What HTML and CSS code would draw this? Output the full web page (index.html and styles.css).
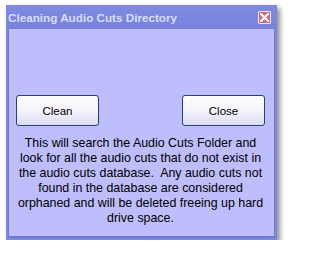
FILE: index.html
```html
<!DOCTYPE html>
<html>
<head>
<meta charset="utf-8">
<link rel="stylesheet" href="styles.css">
</head>
<body>
<div class="window">
  <div class="titlebar">
    <span class="title">Cleaning Audio Cuts Directory</span>
    <span class="close-x">
      <svg width="9" height="9" viewBox="0 0 9 9"><path d="M1 1 L8 8 M8 1 L1 8" stroke="#fff" stroke-width="2.2" stroke-linecap="square"/></svg>
    </span>
  </div>
  <div class="content">
    <div class="buttons">
      <button class="btn">Clean</button>
      <button class="btn">Close</button>
    </div>
    <p class="message">This will search the Audio Cuts Folder and<br>look for all the audio cuts that do not exist in<br>the audio cuts database.&nbsp; Any audio cuts not<br>found in the database are considered<br>orphaned and will be deleted freeing up hard<br>drive space.</p>
  </div>
</div>
</body>
</html>
```
FILE: styles.css
```css
html, body {
  margin: 0;
  padding: 0;
  background: #ffffff;
}
.window {
  margin: 5px 0 0 6px;
  width: 271px;
  height: 235px;
  box-sizing: border-box;
  background: #6d78d8;
  border: 2px solid #7c88e0;
  border-top: none;
  box-shadow: 3px 3px 5px rgba(0,0,0,0.45);
  display: flex;
  flex-direction: column;
}
.titlebar {
  height: 23px;
  flex: none;
  display: flex;
  align-items: center;
  justify-content: space-between;
  padding: 1px 4px 0 0;
  background: linear-gradient(#7f8be2, #7682dc);
}
.title {
  font-family: "Liberation Sans", Arial, sans-serif;
  font-weight: bold;
  font-size: 11.7px;
  color: #d8defe;
}
.close-x {
  width: 13px;
  height: 13px;
  box-sizing: border-box;
  border: 1px solid #f4e6ee;
  background: #c86a80;
  display: flex;
  align-items: center;
  justify-content: center;
  border-radius: 1px;
}
.close-x svg { display: block; }
.content {
  flex: 1;
  margin: 0 1px 2px 1px;
  background: #bebefc;
  padding: 66px 9px 0 7px;
}
.buttons {
  display: flex;
  justify-content: space-between;
}
.btn {
  width: 83px;
  height: 31px;
  border: 1px solid #1f4474;
  border-radius: 3px;
  background: linear-gradient(#ffffff 0%, #f4f4fc 50%, #dcdcf2 100%);
  font-family: "Liberation Sans", Arial, sans-serif;
  font-size: 11.5px;
  color: #000;
  padding: 0;
}
.message {
  margin: 10px 0 0 0;
  font-family: "Liberation Sans", Arial, sans-serif;
  font-size: 12.4px;
  line-height: 15px;
  text-align: center;
  color: #000;
  white-space: nowrap;
}
```
